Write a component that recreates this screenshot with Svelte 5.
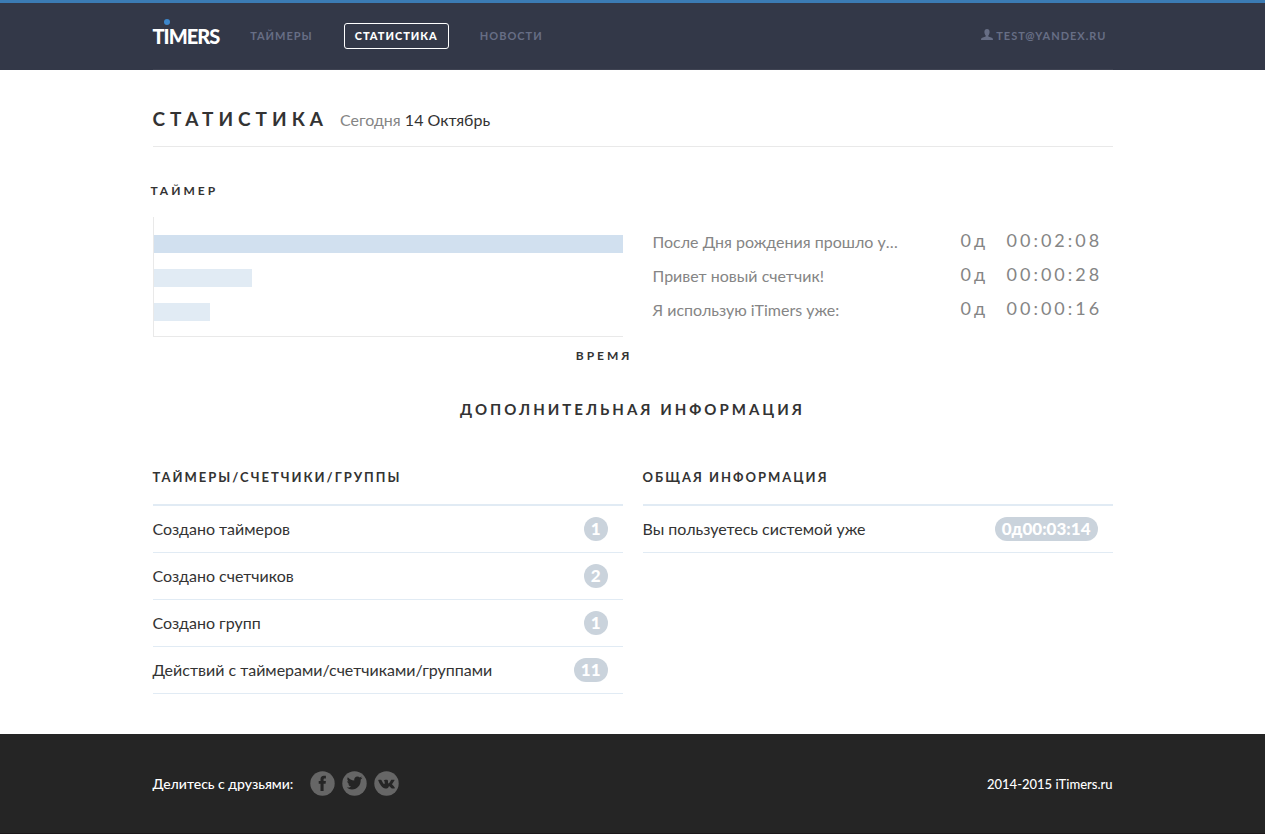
<script lang="ts">
	const nav = [
		{ title: 'Таймеры', active: false },
		{ title: 'Статистика', active: true },
		{ title: 'Новости', active: false }
	];

	// bar width is a percent of the chart
	const timers = [
		{ name: 'После Дня рождения прошло уже:', days: 0, time: '00:02:08', width: 100 },
		{ name: 'Привет новый счетчик!', days: 0, time: '00:00:28', width: 21 },
		{ name: 'Я использую iTimers уже:', days: 0, time: '00:00:16', width: 12 }
	];

	const created = [
		{ label: 'Создано таймеров', value: 1 },
		{ label: 'Создано счетчиков', value: 2 },
		{ label: 'Создано групп', value: 1 },
		{ label: 'Действий с таймерами/счетчиками/группами', value: 11 }
	];

	const general = [{ label: 'Вы пользуетесь системой уже', value: '0д00:03:14' }];
</script>

{#snippet stats(title: string, rows: { label: string; value: string | number }[])}
	<section class="stats">
		<h3>{title}</h3>
		<ul>
			{#each rows as row}
				<li>
					<span>{row.label}</span>
					<span class="badge">{row.value}</span>
				</li>
			{/each}
		</ul>
	</section>
{/snippet}

<header>
	<div class="container bar">
		<a class="logo" href="/">TIMERS</a>
		<nav>
			{#each nav as item}
				<a href="/" class:active={item.active}>{item.title}</a>
			{/each}
		</nav>
		<a class="user" href="/">
			<svg width="12" height="11" viewBox="0 0 12 11" aria-hidden="true">
				<path d="M6 0C4.300 0 3.400 1.200 3.400 3c0 1.600.6 2.800 1.300 3.500v1L1.200 8.800C.4 9.200 0 9.800 0 11h12c0-1.200-.4-1.800-1.200-2.200L7.300 7.500v-1C8 5.800 8.600 4.600 8.600 3 8.600 1.200 7.700 0 6 0z" />
			</svg>
			test@yandex.ru
		</a>
	</div>
</header>

<main class="container">
	<div class="title">
		<h1>Статистика</h1>
		<p><span>Сегодня</span> 14 Октябрь</p>
	</div>

	<div class="columns">
		<div class="chart">
			<p class="axis">Таймер</p>
			<div class="bars">
				{#each timers as timer, i}
					<div class="fill" class:first={i === 0} style="width: {timer.width}%"></div>
				{/each}
			</div>
			<p class="axis end">Время</p>
		</div>
		<table>
			<tbody>
				{#each timers as timer}
					<tr>
						<td class="name">{timer.name}</td>
						<td class="days">{timer.days}д</td>
						<td class="time">{timer.time}</td>
					</tr>
				{/each}
			</tbody>
		</table>
	</div>

	<h2>Дополнительная информация</h2>

	<div class="columns">
		{@render stats('Таймеры/счетчики/группы', created)}
		{@render stats('Общая информация', general)}
	</div>
</main>

<footer>
	<div class="container bar">
		<span>Делитесь с друзьями:</span>
		<div class="share">
			<a href="/" aria-label="Facebook">
				<svg width="25" height="25" viewBox="0 0 25 25">
					<circle cx="12.500" cy="12.500" r="12.200" />
					<path d="M10.500 20v-7.300H8.700V10h1.800V8.300c0-2.300 1.200-3.500 3.300-3.500h2.100v2.800h-1.300c-.8 0-1 .3-1 1V10h2.300l-.3 2.700h-2V20z" />
				</svg>
			</a>
			<a href="/" aria-label="Twitter">
				<svg width="25" height="25" viewBox="0 0 25 25">
					<circle cx="12.500" cy="12.500" r="12.200" />
					<path d="M4.800 16.600c1.700.1 3.200-.3 4.300-1.200-1.500-.2-2.400-1-2.800-2.200h1.300C6.200 12.600 5.300 11.500 5.300 10l1.300.4C5.300 9.300 5 7.600 5.800 6.200c1.600 1.900 3.800 3 6.500 3.200-.5-2.200 1-4 3.200-4 .9 0 1.700.4 2.300 1l2-.8c-.2.800-.7 1.300-1.300 1.700l1.900-.5c-.4.700-1 1.300-1.700 1.800C19 14.300 15.300 18.500 10 18.500c-1.900 0-3.700-.6-5.200-1.900z" />
				</svg>
			</a>
			<a href="/" aria-label="ВКонтакте">
				<svg width="25" height="25" viewBox="0 0 25 25">
					<circle cx="12.500" cy="12.500" r="12.200" />
					<path d="M12.800 17.400h-1.300C8.300 17.300 6 13.700 4.300 9.500c-.2-.5 0-.8.500-.8h2c.4 0 .6.200.8.600.7 1.700 1.800 3.700 2.600 3.800.4 0 .5-.5.500-1.500 0-1.200-.3-1.800-1-2 .4-.7 1.200-.9 2.400-.9 1.400 0 1.900.3 1.900 1.400 0 .9-.1 2.200.4 2.500.6.200 1.600-1.600 2.500-3.400.2-.4.400-.5.800-.5h2.200c.7 0 .8.300.5.900-.6 1.300-2.400 3.300-2.400 3.700 0 .6 2.100 2 2.700 3.100.3.600 0 1-.7 1h-2.100c-1 0-1.900-2.100-2.800-2.100-.6 0-.3 2.100-2.300 2.100z" />
				</svg>
			</a>
		</div>
		<span class="copy">2014-2015 iTimers.ru</span>
	</div>
</footer>

<style>
	:global(body) {
		margin: 0;
		background: #fff;
		color: #333;
		font: 16px/24px Lato, 'Open Sans', sans-serif;
	}

	a {
		color: inherit;
		text-decoration: none;
	}

	h1,
	h2,
	h3,
	p,
	ul {
		margin: 0;
		padding: 0;
	}

	.container {
		max-width: 960px;
		margin: 0 auto;
	}

	.bar {
		display: flex;
		align-items: center;
	}

	header {
		border-top: 3px solid #3b7bb4;
		background: #333848;
		color: #676e85;
		font-size: 11px;
		font-weight: 700;
		letter-spacing: 1px;
		text-transform: uppercase;
	}

	header .bar {
		height: 66px;
		border-bottom: 1px solid #3f4352;
	}

	.logo {
		position: relative;
		color: #fff;
		font: 900 20px/24px Lato, sans-serif;
		letter-spacing: -1px;
	}

	.logo::before {
		content: '';
		position: absolute;
		top: -5px;
		left: 11px;
		width: 6px;
		height: 6px;
		border-radius: 50%;
		background: #3d87cb;
	}

	nav {
		display: flex;
		gap: 20px;
		margin-left: 20px;
	}

	nav a {
		padding: 0 10px;
		border: 1px solid transparent;
		border-radius: 3px;
	}

	nav .active {
		border-color: #fff;
		color: #fff;
		font-weight: 900;
	}

	.user {
		margin-left: auto;
		padding-right: 6px;
	}

	.user svg {
		fill: #676e85;
	}

	.title {
		display: flex;
		align-items: baseline;
		gap: 12px;
		padding: 35px 0 13px;
		border-bottom: 1px solid #e9e9e9;
	}

	h1 {
		font-size: 19px;
		line-height: 28px;
		letter-spacing: 5px;
		text-transform: uppercase;
	}

	.title span,
	table {
		color: #858585;
	}

	.columns {
		display: grid;
		grid-template-columns: 1fr 1fr;
		gap: 20px;
	}

	.chart {
		padding-top: 36px;
	}

	.axis {
		margin: 0 -10px 0 -2px;
		font-size: 12px;
		font-weight: 700;
		line-height: 16px;
		letter-spacing: 3px;
		text-transform: uppercase;
	}

	.end {
		text-align: right;
	}

	.bars {
		display: grid;
		gap: 16px;
		margin: 18px 0 11px;
		padding: 18px 0 15px;
		border: solid #e9e9e9;
		border-width: 0 0 1px 1px;
	}

	.fill {
		height: 18px;
		background: #e1ebf4;
	}

	.first {
		background: #d1e0ef;
	}

	table {
		width: 100%;
		margin-top: 78px;
		border-spacing: 0;
		table-layout: fixed;
		align-self: start;
	}

	td {
		box-sizing: border-box;
		height: 34px;
		padding: 0;
		white-space: nowrap;
	}

	.name {
		padding-left: 10px;
		padding-right: 60px;
		overflow: hidden;
		text-overflow: ellipsis;
	}

	.days,
	.time {
		width: 46px;
		padding-bottom: 4px;
		font-size: 18px;
		letter-spacing: 3px;
	}

	.time {
		width: 106px;
	}

	h2 {
		margin: 33px 0 46px;
		font-size: 15px;
		letter-spacing: 3px;
		text-align: center;
		text-transform: uppercase;
	}

	h3 {
		padding-bottom: 17px;
		border-bottom: 2px solid #e1ebf4;
		font-size: 13px;
		line-height: 20px;
		letter-spacing: 2px;
		text-transform: uppercase;
	}

	li {
		display: flex;
		align-items: center;
		justify-content: space-between;
		height: 46px;
		padding-right: 15px;
		border-bottom: 1px solid #e1ebf4;
	}

	.badge {
		padding: 0 7px;
		border-radius: 12px;
		background: #cad3dc;
		color: #fff;
		font-size: 17px;
		font-weight: 900;
	}

	footer {
		margin-top: 40px;
		border-bottom: 1px solid #1b1719;
		background: #252525;
		color: #fff;
		font-size: 14px;
		font-weight: 500;
	}

	footer .bar {
		height: 99px;
	}

	.share {
		display: flex;
		gap: 7px;
		margin-left: 17px;
	}

	.share svg {
		display: block;
		fill: #252525;
	}

	.share circle {
		fill: #666;
	}

	.copy {
		margin-left: auto;
		font-size: 13px;
	}
</style>
